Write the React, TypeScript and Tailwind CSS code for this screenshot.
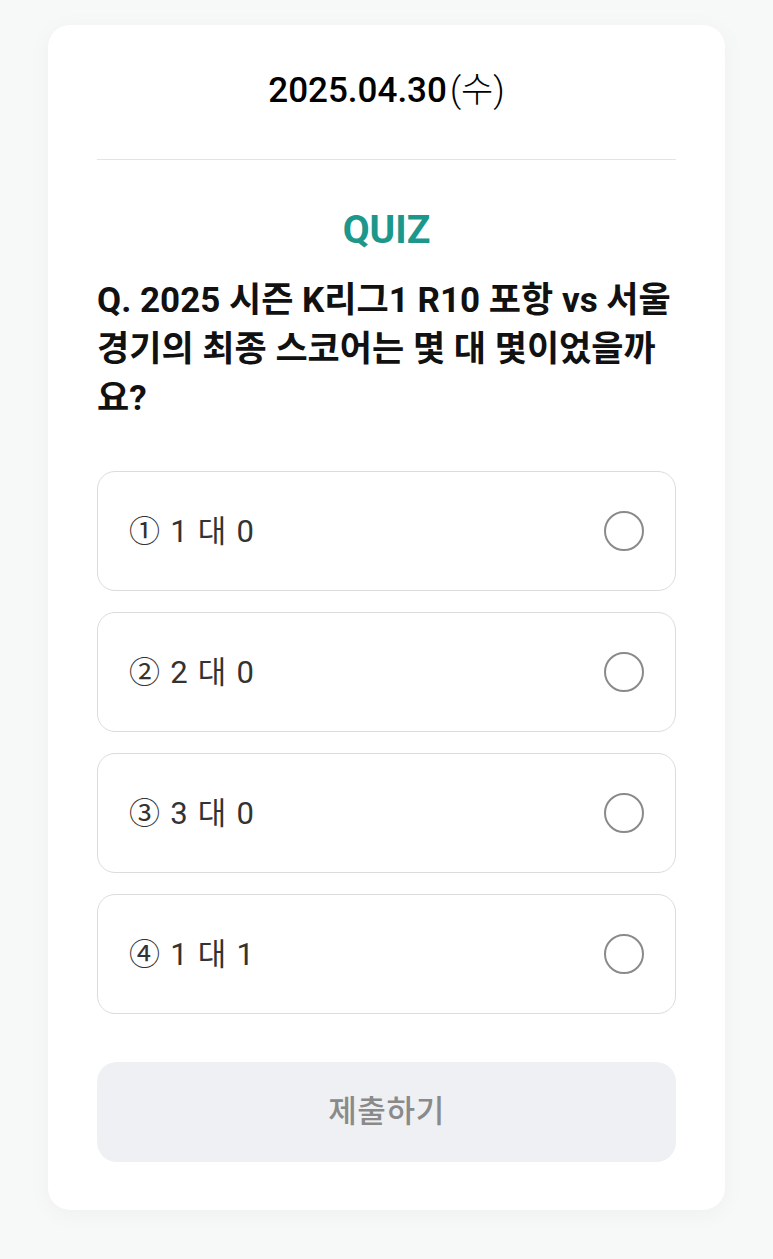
const options = ['① 1 대 0', '② 2 대 0', '③ 3 대 0', '④ 1 대 1'];

export default function App() {
  return (
    <div
      className="min-h-screen bg-[#f7f8f8] px-[48px] pt-[25px] pb-[49px]"
      style={{ fontFamily: 'Roboto, "Noto Sans CJK KR", sans-serif' }}
    >
      <div className="rounded-[22px] bg-white px-[49px] pt-[44px] pb-[48px] shadow-[0_4px_24px_rgba(0,0,0,0.04)]">
        <div className="flex items-baseline justify-center text-[35px] leading-[44px] text-black">
          <span className="font-medium">2025.04.30</span>
          <span className="ml-[3px] font-light">(수)</span>
        </div>

        <div className="mt-[46px] h-px bg-[#e4e4e4]" />

        <h2 className="mt-[47px] text-center text-[39px] font-bold leading-[46px] text-[#1b978c]">QUIZ</h2>

        <p className="mt-[23px] text-[35px] font-bold leading-[49px] text-[#111]">
          Q. 2025 시즌 K리그1 R10 포항 vs 서울 경기의 최종 스코어는 몇 대 몇이었을까요?
        </p>

        <div className="mt-[48px] flex flex-col gap-[21px]">
          {options.map((label) => (
            <button
              key={label}
              className="flex h-[120px] items-center justify-between rounded-[18px] border border-[#dcdcdc] bg-white pl-[31px] pr-[31px] text-left"
            >
              <span className="text-[31px] leading-none tracking-[0.04em] text-[#333]">{label}</span>
              <span className="size-[40px] rounded-full border-2 border-[#8a8a8a]" />
            </button>
          ))}
        </div>

        <button className="mt-[48px] flex h-[100px] w-full items-center justify-center rounded-[20px] bg-[#eff0f3] text-[31px] font-medium tracking-[0.02em] text-[#8a8a8a]">
          제출하기
        </button>
      </div>
    </div>
  );
}
